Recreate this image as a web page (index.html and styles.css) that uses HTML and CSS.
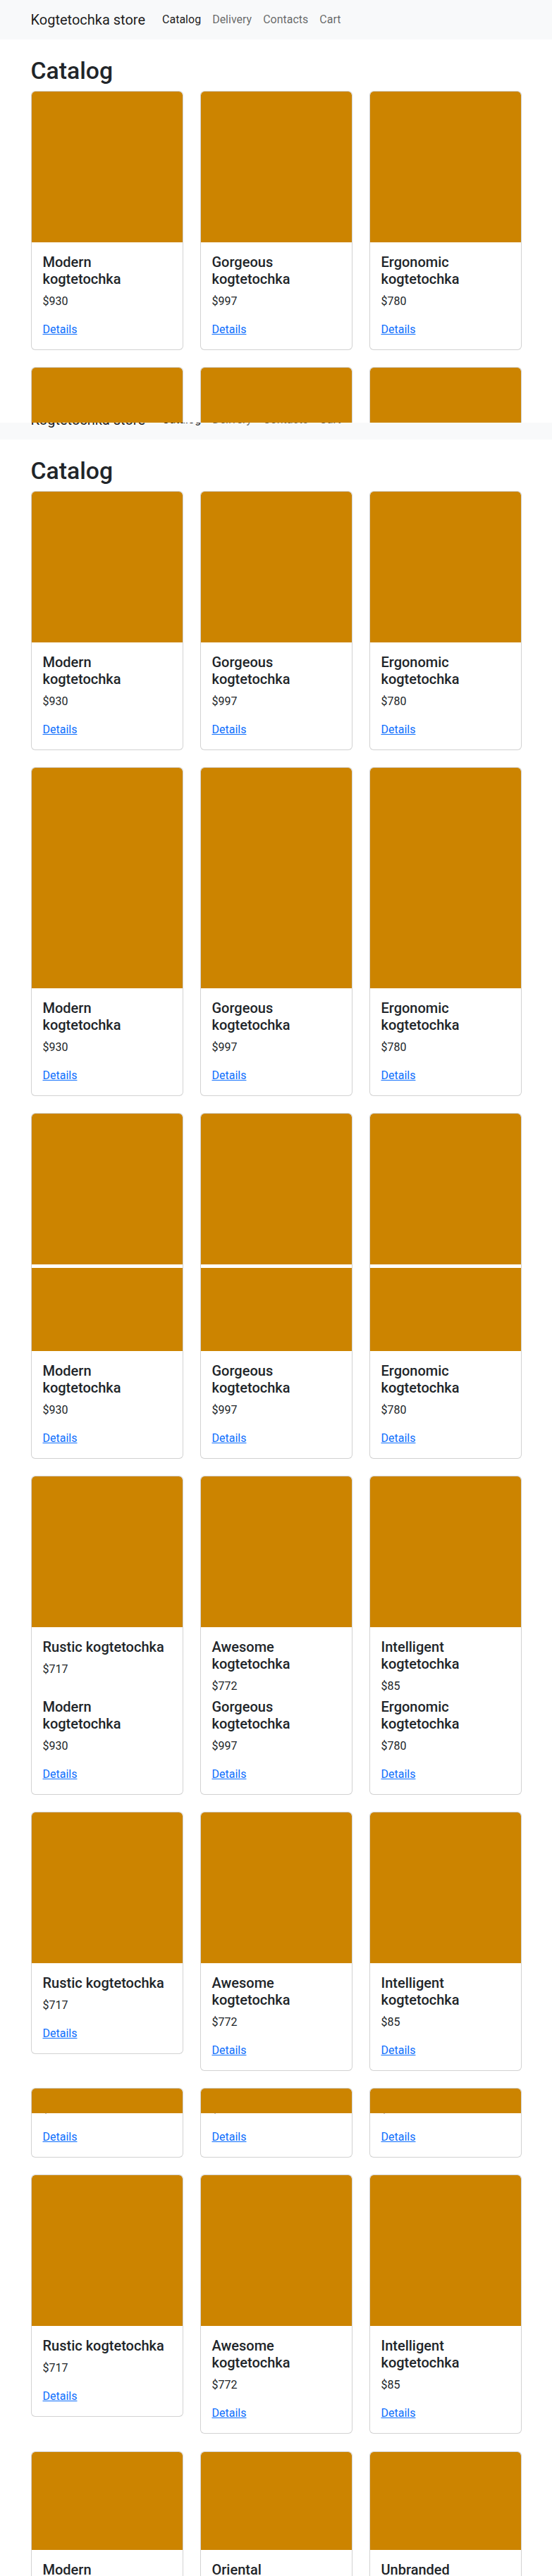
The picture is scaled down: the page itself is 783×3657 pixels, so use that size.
FILE: index.html
```html
<!DOCTYPE html>
<html lang="en">
<head>
<meta charset="utf-8">
<title>Kogtetochka store — Catalog</title>
<link rel="stylesheet" href="styles.css">
</head>
<body>

<nav class="navbar">
  <div class="container nav-inner">
    <a class="brand" href="#">Kogtetochka store</a>
    <ul class="nav">
      <li><a class="nav-link active" href="#">Catalog</a></li>
      <li><a class="nav-link" href="#">Delivery</a></li>
      <li><a class="nav-link" href="#">Contacts</a></li>
      <li><a class="nav-link" href="#">Cart</a></li>
    </ul>
  </div>
</nav>

<main class="container page">
  <h1 class="page-title">Catalog</h1>
  <div class="rows">
    <div class="grid">
      <div class="card"><div class="card-img"></div><div class="card-body"><h5 class="card-title">Modern kogtetochka</h5><p class="card-text">$930</p><a class="card-link" href="#">Details</a></div></div>
      <div class="card"><div class="card-img"></div><div class="card-body"><h5 class="card-title">Gorgeous kogtetochka</h5><p class="card-text">$997</p><a class="card-link" href="#">Details</a></div></div>
      <div class="card"><div class="card-img"></div><div class="card-body"><h5 class="card-title">Ergonomic kogtetochka</h5><p class="card-text">$780</p><a class="card-link" href="#">Details</a></div></div>
    </div>
    <div class="grid clip-first">
      <div class="card"><div class="card-img"></div></div>
      <div class="card"><div class="card-img"></div></div>
      <div class="card"><div class="card-img"></div></div>
    </div>
  </div>
</main>

<nav class="navbar navbar-clip">
  <div class="container nav-inner nav-shift">
    <a class="brand" href="#">Kogtetochka store</a>
    <ul class="nav">
      <li><a class="nav-link active" href="#">Catalog</a></li>
      <li><a class="nav-link" href="#">Delivery</a></li>
      <li><a class="nav-link" href="#">Contacts</a></li>
      <li><a class="nav-link" href="#">Cart</a></li>
    </ul>
  </div>
</nav>

<main class="container page">
  <h1 class="page-title">Catalog</h1>
  <div class="rows">
    <div class="grid">
      <div class="card"><div class="card-img"></div><div class="card-body"><h5 class="card-title">Modern kogtetochka</h5><p class="card-text">$930</p><a class="card-link" href="#">Details</a></div></div>
      <div class="card"><div class="card-img"></div><div class="card-body"><h5 class="card-title">Gorgeous kogtetochka</h5><p class="card-text">$997</p><a class="card-link" href="#">Details</a></div></div>
      <div class="card"><div class="card-img"></div><div class="card-body"><h5 class="card-title">Ergonomic kogtetochka</h5><p class="card-text">$780</p><a class="card-link" href="#">Details</a></div></div>
    </div>

    <div class="grid">
      <div class="card"><div class="card-img img-tall"></div><div class="card-body"><h5 class="card-title">Modern kogtetochka</h5><p class="card-text">$930</p><a class="card-link" href="#">Details</a></div></div>
      <div class="card"><div class="card-img img-tall"></div><div class="card-body"><h5 class="card-title">Gorgeous kogtetochka</h5><p class="card-text">$997</p><a class="card-link" href="#">Details</a></div></div>
      <div class="card"><div class="card-img img-tall"></div><div class="card-body"><h5 class="card-title">Ergonomic kogtetochka</h5><p class="card-text">$780</p><a class="card-link" href="#">Details</a></div></div>
    </div>

    <div class="grid">
      <div class="card"><div class="card-img"></div><div class="card-img img-rest"></div><div class="card-body"><h5 class="card-title">Modern kogtetochka</h5><p class="card-text">$930</p><a class="card-link" href="#">Details</a></div></div>
      <div class="card"><div class="card-img"></div><div class="card-img img-rest"></div><div class="card-body"><h5 class="card-title">Gorgeous kogtetochka</h5><p class="card-text">$997</p><a class="card-link" href="#">Details</a></div></div>
      <div class="card"><div class="card-img"></div><div class="card-img img-rest"></div><div class="card-body"><h5 class="card-title">Ergonomic kogtetochka</h5><p class="card-text">$780</p><a class="card-link" href="#">Details</a></div></div>
    </div>

    <div class="grid">
      <div class="card"><div class="card-img"></div>
        <div class="card-body body-upper"><h5 class="card-title">Rustic kogtetochka</h5><p class="card-text">$717</p></div>
        <div class="card-body body-lower"><h5 class="card-title">Modern kogtetochka</h5><p class="card-text">$930</p><a class="card-link" href="#">Details</a></div>
      </div>
      <div class="card"><div class="card-img"></div>
        <div class="card-body body-upper"><h5 class="card-title">Awesome kogtetochka</h5><p class="card-text">$772</p></div>
        <div class="card-body body-lower"><h5 class="card-title">Gorgeous kogtetochka</h5><p class="card-text">$997</p><a class="card-link" href="#">Details</a></div>
      </div>
      <div class="card"><div class="card-img"></div>
        <div class="card-body body-upper"><h5 class="card-title">Intelligent kogtetochka</h5><p class="card-text">$85</p></div>
        <div class="card-body body-lower"><h5 class="card-title">Ergonomic kogtetochka</h5><p class="card-text">$780</p><a class="card-link" href="#">Details</a></div>
      </div>
    </div>

    <div class="grid">
      <div class="card"><div class="card-img"></div><div class="card-body"><h5 class="card-title">Rustic kogtetochka</h5><p class="card-text">$717</p><a class="card-link" href="#">Details</a></div></div>
      <div class="card"><div class="card-img"></div><div class="card-body"><h5 class="card-title">Awesome kogtetochka</h5><p class="card-text">$772</p><a class="card-link" href="#">Details</a></div></div>
      <div class="card"><div class="card-img"></div><div class="card-body"><h5 class="card-title">Intelligent kogtetochka</h5><p class="card-text">$85</p><a class="card-link" href="#">Details</a></div></div>
    </div>

    <div class="grid">
      <div class="card"><div class="card-img img-short"></div><div class="card-body body-partial"><div class="price-clip"><p class="card-text">$930</p></div><a class="card-link" href="#">Details</a></div></div>
      <div class="card"><div class="card-img img-short"></div><div class="card-body body-partial"><div class="price-clip"><p class="card-text">$997</p></div><a class="card-link" href="#">Details</a></div></div>
      <div class="card"><div class="card-img img-short"></div><div class="card-body body-partial"><div class="price-clip"><p class="card-text">$780</p></div><a class="card-link" href="#">Details</a></div></div>
    </div>

    <div class="grid">
      <div class="card"><div class="card-img"></div><div class="card-body"><h5 class="card-title">Rustic kogtetochka</h5><p class="card-text">$717</p><a class="card-link" href="#">Details</a></div></div>
      <div class="card"><div class="card-img"></div><div class="card-body"><h5 class="card-title">Awesome kogtetochka</h5><p class="card-text">$772</p><a class="card-link" href="#">Details</a></div></div>
      <div class="card"><div class="card-img"></div><div class="card-body"><h5 class="card-title">Intelligent kogtetochka</h5><p class="card-text">$85</p><a class="card-link" href="#">Details</a></div></div>
    </div>

    <div class="grid clip-last">
      <div class="card"><div class="card-img img-mid"></div><div class="card-body"><h5 class="card-title">Modern kogtetochka</h5><p class="card-text">$930</p><a class="card-link" href="#">Details</a></div></div>
      <div class="card"><div class="card-img img-mid"></div><div class="card-body"><h5 class="card-title">Oriental kogtetochka</h5><p class="card-text">$512</p><a class="card-link" href="#">Details</a></div></div>
      <div class="card"><div class="card-img img-mid"></div><div class="card-body"><h5 class="card-title">Unbranded kogtetochka</h5><p class="card-text">$348</p><a class="card-link" href="#">Details</a></div></div>
    </div>
  </div>
</main>

</body>
</html>
```
FILE: styles.css
```css
* { box-sizing: border-box; }

html, body {
  margin: 0;
  padding: 0;
  background: #fff;
}

body {
  font-family: Roboto, "Liberation Sans", Arial, sans-serif;
  font-size: 16px;
  line-height: 1.5;
  color: #212529;
  overflow: hidden;
}

a { color: #0d6efd; }

.container {
  width: 696px;
  margin: 0 auto;
}

/* navbar */
.navbar {
  background: #f8f9fa;
  height: 56px;
}

.nav-inner {
  display: flex;
  align-items: center;
  height: 56px;
  padding: 8px 0;
}

.brand {
  font-size: 20px;
  line-height: 30px;
  padding: 5px 0;
  margin-right: 16px;
  color: rgba(0, 0, 0, 0.9);
  text-decoration: none;
  white-space: nowrap;
}

.nav {
  display: flex;
  list-style: none;
  margin: 0;
  padding: 0;
}

.nav-link {
  display: block;
  padding: 8px;
  line-height: 24px;
  color: rgba(0, 0, 0, 0.6);
  text-decoration: none;
}

.nav-link.active { color: rgba(0, 0, 0, 0.9); }

.navbar-clip {
  height: 24px;
  overflow: hidden;
}

.nav-shift { margin-top: -32px; }

/* page */
.page { padding-top: 24px; }

.page-title {
  font-size: 33.75px;
  font-weight: 500;
  line-height: 41px;
  margin: 0 0 8px;
  color: #212529;
}

.rows {
  display: flex;
  flex-direction: column;
  gap: 24px;
}

.grid {
  display: grid;
  grid-template-columns: repeat(3, 216px);
  column-gap: 24px;
  align-items: start;
}

.clip-first {
  height: 79px;
  overflow: hidden;
}

.clip-last {
  height: 177px;
  overflow: hidden;
  margin-top: 1px;
}

/* card */
.card {
  border: 1px solid rgba(0, 0, 0, 0.175);
  border-radius: 6px;
  background: #fff;
  overflow: hidden;
}

.card-img {
  height: 214px;
  background: #cc8400;
  border-radius: 5px 5px 0 0;
}

.img-tall { height: 313px; }
.img-short { height: 35px; }
.img-mid { height: 139px; }

.img-rest {
  height: 118px;
  margin-top: 5px;
  border-radius: 0;
}

.card-body { padding: 16px; }

.card-title {
  font-size: 20px;
  font-weight: 500;
  line-height: 24px;
  margin: 0 0 8px;
}

.card-text {
  margin: 0 0 16px;
  line-height: 24px;
}

.card-link {
  display: inline-block;
  line-height: 24px;
  color: #0d6efd;
  text-decoration: underline;
}

.body-upper {
  height: 96px;
  padding-bottom: 0;
  overflow: hidden;
}

.body-upper .card-text { margin-bottom: 0; }

.body-lower { padding-top: 5px; }

.body-partial { padding-top: 0; }

.price-clip {
  height: 6px;
  overflow: hidden;
  margin-bottom: 16px;
}

.price-clip .card-text {
  margin: -18px 0 0;
}
```
